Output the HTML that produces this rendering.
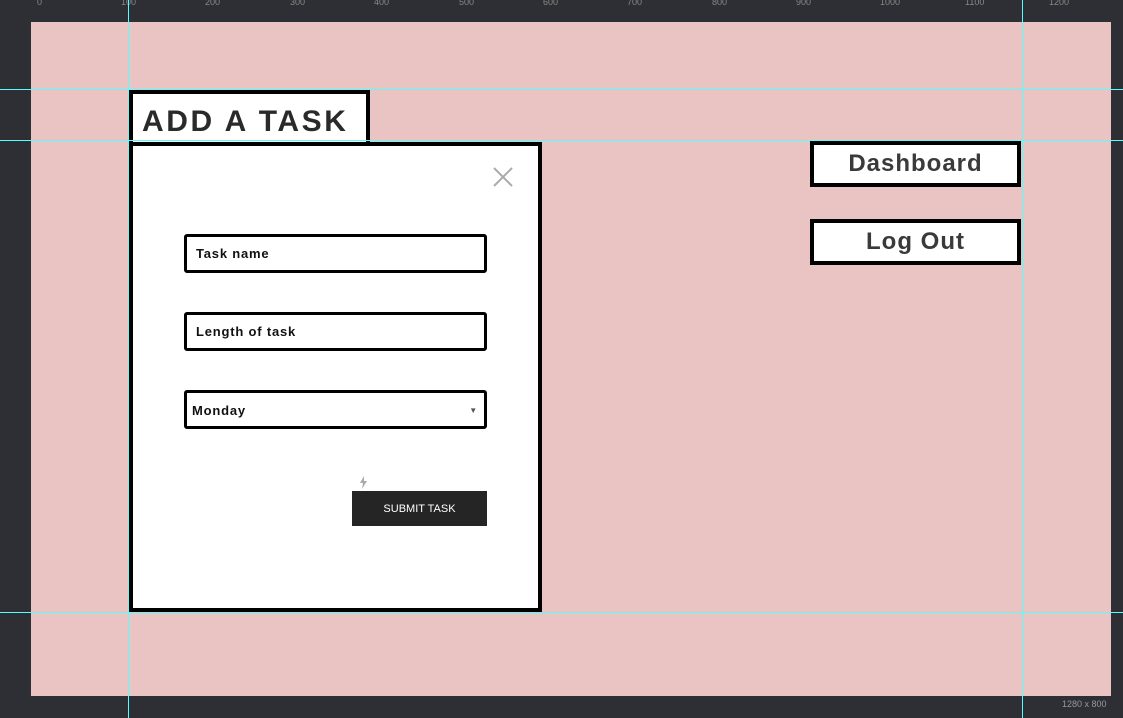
<!DOCTYPE html>
<html><head><style>
body{margin:0;width:1123px;height:718px;background:#2e2f34;position:relative;overflow:hidden;font-family:"Liberation Sans",sans-serif}
.a{position:absolute;box-sizing:border-box}
.lab{position:absolute;top:-3px;font-size:9px;color:#888}
.inp{position:absolute;left:184px;width:303px;height:39px;border:3px solid #000;border-radius:3px;background:#fff;box-sizing:border-box;font-weight:bold;font-size:13px;letter-spacing:0.8px;padding:9px 0 0 9px;color:#111}
.btn{position:absolute;left:810px;width:211px;height:46px;border:4px solid #000;background:#fff;box-sizing:border-box;text-align:center;font-size:24px;font-weight:bold;letter-spacing:1px;color:#3a3a3a;line-height:38px}
</style></head><body>
<div class="a" style="left:31px;top:22px;width:1080px;height:674px;background:#eac3c3"></div>
<span class="lab" style="left:37px">0</span><span class="lab" style="left:121px">100</span><span class="lab" style="left:205px">200</span><span class="lab" style="left:290px">300</span><span class="lab" style="left:374px">400</span><span class="lab" style="left:459px">500</span><span class="lab" style="left:543px">600</span><span class="lab" style="left:627px">700</span><span class="lab" style="left:712px">800</span><span class="lab" style="left:796px">900</span><span class="lab" style="left:880px">1000</span><span class="lab" style="left:965px">1100</span><span class="lab" style="left:1049px">1200</span>
<div class="a" style="left:129px;top:90px;width:241px;height:54px;background:#fff;border:4px solid #000;border-bottom:none;font-size:30px;font-weight:bold;letter-spacing:2.6px;color:#2a2a2a;padding:11px 0 0 9px">ADD A TASK</div>
<div class="a" style="left:129px;top:142px;width:413px;height:470px;background:#fff;border:4px solid #000"></div>
<svg class="a" style="left:493px;top:167px" width="20" height="20"><path d="M1 1L19 19M19 1L1 19" stroke="#aaa" stroke-width="2"/></svg>
<div class="inp" style="top:234px">Task name</div>
<div class="inp" style="top:312px">Length of task</div>
<div class="inp" style="top:390px;padding-left:5px;padding-top:10px">Monday<span style="position:absolute;right:6px;top:13px;font-size:8px;color:#555">▼</span></div>
<svg class="a" style="left:359px;top:476px" width="9" height="13"><path d="M5 0L1 7H4L3 13L8 5H5Z" fill="#aaa"/></svg>
<div class="a" style="left:352px;top:491px;width:135px;height:35px;background:#252525;color:#fff;font-size:11px;text-align:center;line-height:36px">SUBMIT TASK</div>
<div class="btn" style="top:141px">Dashboard</div>
<div class="btn" style="top:219px">Log Out</div>
<div class="a" style="left:128px;top:0;width:1px;height:718px;background:#5ff"></div>
<div class="a" style="left:1022px;top:0;width:1px;height:718px;background:#5ff"></div>
<div class="a" style="left:0;top:89px;width:1123px;height:1px;background:#5ff"></div>
<div class="a" style="left:0;top:140px;width:1123px;height:1px;background:#5ff"></div>
<div class="a" style="left:0;top:612px;width:1123px;height:1px;background:#5ff"></div>
<div class="a" style="left:1062px;top:699px;font-size:9px;color:#999">1280 x 800</div>
</body></html>
